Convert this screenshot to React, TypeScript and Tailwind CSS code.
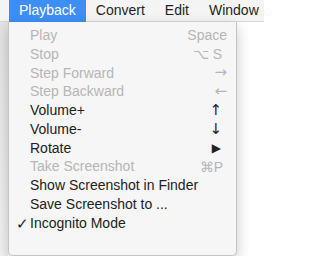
import React from "react";

type Item = {
  label: string;
  shortcut?: string;
  disabled?: boolean;
  checked?: boolean;
  pr: string;
  sc?: string;
};

const ARROW = "text-[15px] font-['DejaVu_Sans',sans-serif]";

const ITEMS: Item[] = [
  { label: "Play", shortcut: "Space", disabled: true, pr: "pr-[9px]" },
  { label: "Stop", shortcut: "⌥ S", disabled: true, pr: "pr-[14px]" },
  { label: "Step Forward", shortcut: "→", disabled: true, pr: "pr-[9px]", sc: ARROW },
  { label: "Step Backward", shortcut: "←", disabled: true, pr: "pr-[9px]", sc: ARROW },
  { label: "Volume+", shortcut: "↑", pr: "pr-[14px]", sc: ARROW },
  { label: "Volume-", shortcut: "↓", pr: "pr-[14px]", sc: ARROW },
  { label: "Rotate", shortcut: "▶", pr: "pr-[15px]", sc: "text-[12px] font-['DejaVu_Sans',sans-serif]" },
  { label: "Take Screenshot", shortcut: "⌘P", disabled: true, pr: "pr-[13px]" },
  { label: "Show Screenshot in Finder", pr: "pr-[9px]" },
  { label: "Save Screenshot to ...", pr: "pr-[9px]" },
  { label: "Incognito Mode", checked: true, pr: "pr-[9px]" },
];

const MENUS = ["Playback", "Convert", "Edit", "Window"];

export default function App() {
  return (
    <div className="w-[264px] h-[256px] overflow-hidden bg-white font-['Liberation_Sans',Arial,sans-serif] text-[14px]">
      {/* Menu bar */}
      <div className="flex h-[22px] items-center bg-[#f4f4f4] border-b border-[#d6d6d6] pl-[9px] whitespace-nowrap">
        {MENUS.map((m, i) => (
          <div
            key={m}
            className={
              i === 0
                ? "flex h-[22px] items-center px-[10px] bg-[#3d8ef7] text-white"
                : "flex h-[22px] items-center px-[10px] text-[#1f1f1f]"
            }
          >
            {m}
          </div>
        ))}
      </div>

      {/* Dropdown */}
      <div className="flex">
        <div className="w-[8px] h-[234px] bg-[linear-gradient(to_bottom,#e3e3e3,#f3f3f3)]" />
        <div className="w-[229px] pt-[4px] pb-[3px] bg-[#f6f6f6] border-x border-b border-[#c4c4c4] rounded-b-[5px] shadow-[0_5px_14px_rgba(0,0,0,0.22)]">
          {ITEMS.map((it) => (
            <div
              key={it.label}
              className={
                "flex h-[18.8px] items-center justify-between whitespace-nowrap " +
                it.pr +
                (it.disabled ? " text-[#b5b5b5]" : " text-[#222222]")
              }
            >
              <div className="flex items-center">
                <span className="w-[21px] pl-[7px] text-[15px] leading-none">{it.checked ? "✓" : ""}</span>
                <span>{it.label}</span>
              </div>
              {it.shortcut && <span className={"leading-none " + (it.sc ?? "")}>{it.shortcut}</span>}
            </div>
          ))}
        </div>
      </div>
    </div>
  );
}
